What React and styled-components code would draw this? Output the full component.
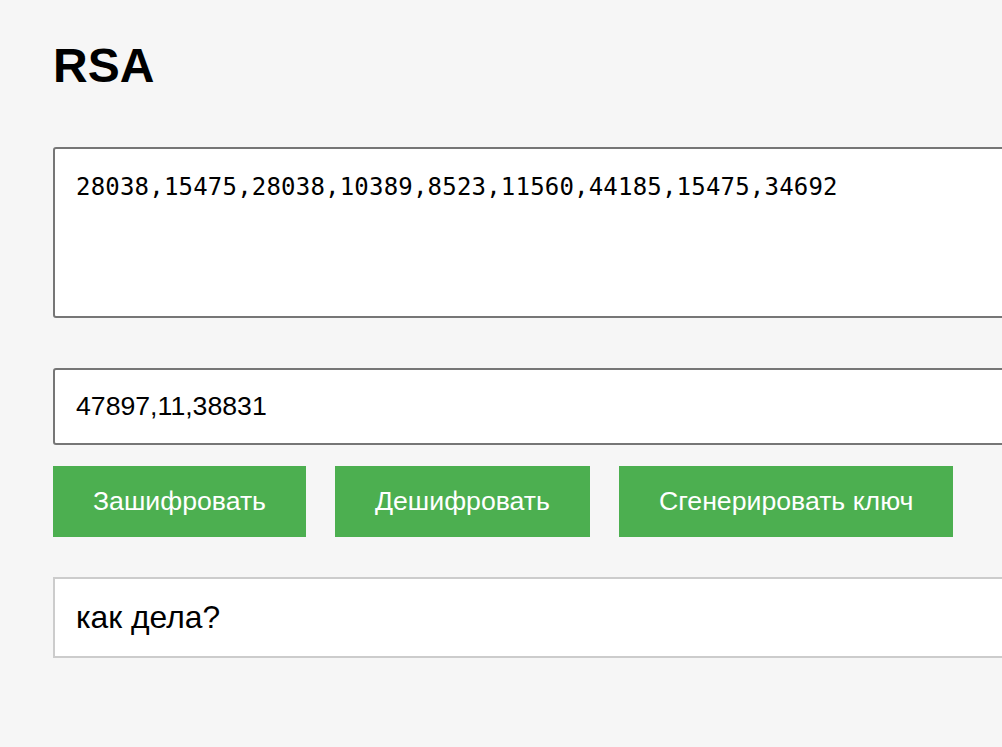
import React, { useState } from "react";
import styled, { createGlobalStyle } from "styled-components";

const GlobalStyle = createGlobalStyle`
  html, body {
    margin: 0;
    padding: 0;
    background: #f6f6f6;
    overflow: hidden;
  }
  body {
    font-family: "Liberation Sans", Arial, sans-serif;
  }
`;

const Page = styled.div`
  display: flex;
  flex-direction: column;
  align-items: flex-start;
  padding: 38px 0 0 53px;
  width: 1100px;
`;

const Title = styled.h1`
  margin: 0 0 53px 0;
  font-size: 48px;
  line-height: 56px;
  font-weight: bold;
  color: #000;
`;

const CipherArea = styled.textarea`
  box-sizing: border-box;
  width: 1060px;
  height: 171px;
  margin: 0 0 50px 0;
  padding: 24px 21px;
  border: 2px solid #767676;
  border-radius: 3px;
  background: #fff;
  font-family: "DejaVu Sans Mono", "Liberation Mono", monospace;
  font-size: 24px;
  line-height: 28px;
  letter-spacing: 0.2px;
  color: #000;
  resize: none;
  outline: none;
`;

const KeyInput = styled.input`
  box-sizing: border-box;
  width: 1060px;
  height: 77px;
  margin: 0 0 21px 0;
  padding: 0 21px;
  border: 2px solid #767676;
  border-radius: 3px;
  background: #fff;
  font-family: "Liberation Sans", Arial, sans-serif;
  font-size: 26.67px;
  color: #000;
  outline: none;
`;

const ButtonRow = styled.div`
  display: flex;
  gap: 29px;
  margin-bottom: 40px;
`;

const Button = styled.button`
  height: 71px;
  padding: 0 40px;
  border: none;
  background: #4caf50;
  color: #fff;
  font-family: "Liberation Sans", Arial, sans-serif;
  font-size: 26.67px;
  cursor: pointer;
`;

const Output = styled.div`
  box-sizing: border-box;
  width: 1060px;
  height: 81px;
  display: flex;
  align-items: center;
  padding: 0 21px;
  border: 2px solid #cccccc;
  background: #fff;
  font-size: 31.8px;
  color: #000;
`;

export default function App() {
  let [cipher, changeCipher] = useState(
    "28038,15475,28038,10389,8523,11560,44185,15475,34692"
  );
  let [key, changeKey] = useState("47897,11,38831");

  return (
    <>
      <GlobalStyle />
      <Page>
        <Title>RSA</Title>
        <CipherArea
          value={cipher}
          onChange={(e) => changeCipher(e.target.value)}
        />
        <KeyInput value={key} onChange={(e) => changeKey(e.target.value)} />
        <ButtonRow>
          <Button>Зашифровать</Button>
          <Button>Дешифровать</Button>
          <Button>Сгенерировать ключ</Button>
        </ButtonRow>
        <Output>как дела?</Output>
      </Page>
    </>
  );
}
